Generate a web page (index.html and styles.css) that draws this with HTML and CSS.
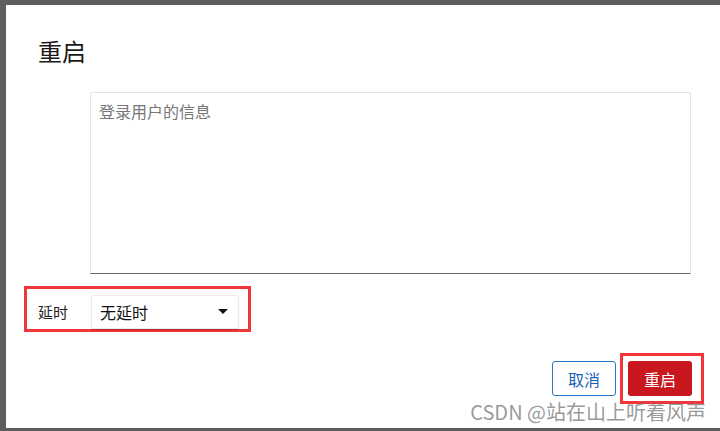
FILE: index.html
```html
<!DOCTYPE html>
<html lang="zh-CN">
<head>
    <meta charset="UTF-8">
    <title>重启</title>
    <link rel="stylesheet" href="styles.css">
</head>
<body>
    <div class="dialog">
        <h2 class="title">重启</h2>

        <textarea class="info" placeholder="登录用户的信息"></textarea>

        <!-- delay row, marked in red -->
        <div class="mark delay-row">
            <span class="label">延时</span>
            <div class="select">
                <span>无延时</span>
                <span class="caret"></span>
            </div>
        </div>

        <div class="actions">
            <button class="btn btn-cancel">取消</button>
            <div class="mark mark-btn">
                <button class="btn btn-primary">重启</button>
            </div>
        </div>

        <div class="watermark">CSDN @站在山上听着风声</div>
    </div>
</body>
</html>
```

FILE: styles.css
```css
html, body {
    margin: 0;
    height: 100%;
}

body {
    background-color: #5e5e5e;
    padding: 5px 0 3px 6px;
    box-sizing: border-box;
    font-family: "Noto Sans CJK SC", "Noto Sans", sans-serif;
    overflow: hidden;
}

.dialog {
    position: relative;
    background-color: #fff;
    height: 100%;
    padding: 31px 0 0 18px;
    box-sizing: border-box;
}

.title {
    margin: 0 0 27px 14px;
    font-size: 24px;
    font-weight: 400;
    line-height: 29px;
    color: #1a1a1a;
}

.info {
    display: block;
    margin-left: 66px;
    width: 601px;
    height: 182px;
    box-sizing: border-box;
    padding: 8px 8px;
    border: 1px solid #e4e4e4;
    border-bottom: 1px solid #5f6b74;
    border-radius: 3px 3px 0 0;
    resize: none;
    font-family: inherit;
    font-size: 16px;
    line-height: 20px;
    outline: none;
}

.info::placeholder {
    color: #767676;
}

/* red annotation boxes */
.mark {
    border: 3px solid #f2353a;
}

.delay-row {
    display: flex;
    align-items: center;
    width: 227px;
    height: 46px;
    box-sizing: border-box;
    margin-top: 12px;
    padding: 5px 0 0 11px;
}

.label {
    font-size: 15px;
    color: #222;
    width: 53px;
}

.select {
    display: flex;
    align-items: center;
    justify-content: space-between;
    width: 148px;
    height: 34px;
    box-sizing: border-box;
    padding: 0 8px;
    border: 1px solid #ececec;
    border-radius: 3px;
    box-shadow: 0 1px 1px rgba(0, 0, 0, 0.25);
    font-size: 16px;
    color: #111;
}

.caret {
    width: 0;
    height: 0;
    margin-right: 2px;
    border-left: 5px solid transparent;
    border-right: 5px solid transparent;
    border-top: 5px solid #111;
}

.actions {
    display: flex;
    align-items: center;
    justify-content: flex-end;
    gap: 4px;
    margin-top: 21px;
    padding-right: 16px;
}

.mark-btn {
    padding: 5px 9px 5px 5px;
}

.btn {
    width: 64px;
    height: 35px;
    border-radius: 3px;
    font-family: inherit;
    font-size: 16px;
    cursor: pointer;
}

.btn-cancel {
    background-color: #fff;
    color: #1b5fb8;
    border: 1px solid #2d76c9;
}

.btn-primary {
    background-color: #c8171e;
    color: #fff;
    border: none;
}

.watermark {
    position: absolute;
    right: 14px;
    bottom: 3px;
    font-size: 20px;
    line-height: 26px;
    color: rgba(120, 120, 120, 0.75);
}
```
